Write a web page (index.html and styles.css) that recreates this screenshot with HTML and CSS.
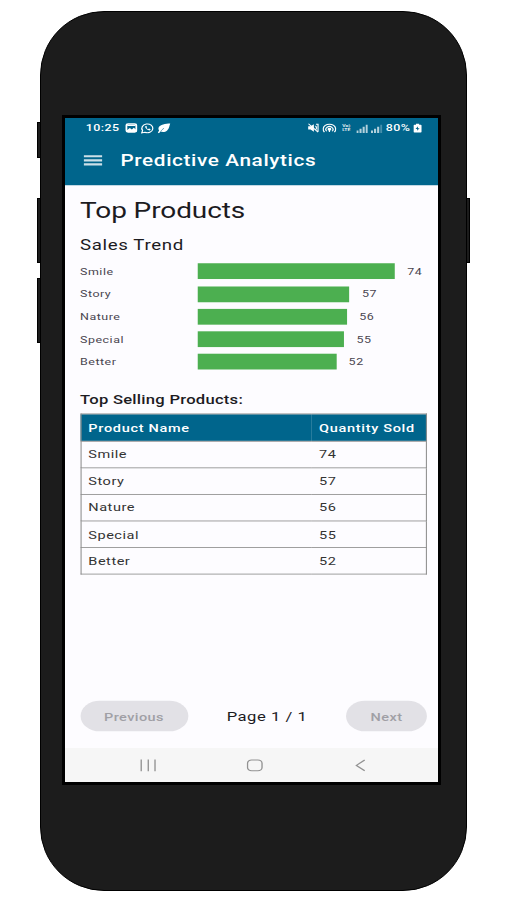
FILE: index.html
```html
<!DOCTYPE html>
<html lang="en">
<head>
    <meta charset="UTF-8">
    <meta name="viewport" content="width=device-width, initial-scale=1.0">
    <title>Predictive Analytics</title>
    <link rel="stylesheet" href="styles.css">
</head>
<body>
    <div class="phone">
        <span class="side-button mute-switch"></span>
        <span class="side-button volume-up"></span>
        <span class="side-button volume-down"></span>
        <span class="side-button power"></span>

        <div class="screen">
            <div class="app">
                <header>
                    <div class="status-bar">
                        <span class="time">10:25</span>
                        <div class="status-icons">
                            <svg width="12" height="12" viewBox="0 0 12 12"><rect x="1.2" y="1.2" width="9.6" height="9.6" rx="1.6" fill="none" stroke="#fff" stroke-width="1.8"/><path d="M1 9.5 4.5 6 6.5 8 8.3 5.8 11 8.5V11H1z" fill="#fff"/><path d="M2 3h8" stroke="#fff" stroke-width="1.4"/></svg>
                            <svg width="13" height="13" viewBox="0 0 13 13" fill="none" stroke="#fff"><path d="M1 12l.8-2.9A5.3 5.3 0 1 1 4 11.2z" stroke-width="1.2"/><path d="M4.2 4c0 2.6 2 4.800 4.700 5l.7-1.500-1.500-.8-.8.7C6.300 7 5.900 6.400 5.600 5.700l.6-.7-.7-1.500z" fill="#fff" stroke="none"/></svg>
                            <svg width="13" height="13" viewBox="0 0 13 13"><path d="M12.500.5C8 .8 2.500 1.500 1.300 5.500c-.5 1.600 0 2.800.5 3.600L.5 11.500l1 .9 1.700-2.200c1.600.9 4.500.9 6.300-1.200C11.800 6.500 11.500 3 12.500.5z" fill="#fff"/><path d="M3.200 10.200C4 8.700 5 7.500 6.500 6.300" stroke="#00658c" stroke-width=".6" fill="none"/></svg>
                        </div>
                        <div class="status-icons status-right">
                            <svg width="11" height="12" viewBox="0 0 11 12"><path d="M.5 4h2.300L6 1.500v9L2.800 8H.5z" fill="#fff"/><path d="M.8 1 10 11M7.500 3.500c1.300 1.200 1.300 3.800 0 5M8 1.500h2v9" stroke="#fff" stroke-width="1.100" fill="none"/></svg>
                            <svg width="14" height="12" viewBox="0 0 14 12" fill="none" stroke="#fff" stroke-width="1.200"><path d="M2.200 11a6 6 0 1 1 9.600 0M4.500 10a3.400 3.400 0 1 1 5 0"/><circle cx="7" cy="7.500" r="1.200" fill="#fff"/><path d="M7 8v3"/></svg>
                            <span class="volte">Vo)<br>LTE</span>
                            <svg class="signal" width="11" height="11" viewBox="0 0 11 11" fill="#fff"><path d="M0 8h2v3H0zM3 6h2v5H3zM6 3.500h2V11H6zM9 1h2v10H9z"/></svg>
                            <svg class="signal" width="11" height="11" viewBox="0 0 11 11" fill="#fff"><path d="M0 8h2v3H0zM3 6h2v5H3zM6 3.500h2V11H6z"/><path d="M9 1h2v10H9z" opacity=".4"/></svg>
                            <span class="battery">80%</span>
                            <svg width="8" height="12" viewBox="0 0 8 12"><path d="M2.500.8h3V2H7a1 1 0 0 1 1 1v7.500a1 1 0 0 1-1 1H1a1 1 0 0 1-1-1V3a1 1 0 0 1 1-1h1.500z" fill="#fff"/><path d="M4.500 3.800 2 7.200h1.700L3.400 9.500 6 6.300H4.300z" fill="#00658c"/></svg>
                        </div>
                    </div>
                    <div class="app-bar">
                        <svg class="menu-icon" width="18" height="14" viewBox="0 0 18 14" fill="#fff"><path d="M0 .8h18v2.600H0zM0 5.700h18v2.600H0zM0 10.600h18v2.600H0z"/></svg>
                        <span class="app-title">Predictive Analytics</span>
                    </div>
                </header>

                <main>
                    <h1>Top Products</h1>
                    <h2>Sales Trend</h2>

                    <div class="chart">
                        <div class="chart-row">
                            <span class="chart-label">Smile</span>
                            <div class="bar" style="width: 190px;"></div>
                            <span>74</span>
                        </div>
                        <div class="chart-row">
                            <span class="chart-label">Story</span>
                            <div class="bar" style="width: 146.4px;"></div>
                            <span>57</span>
                        </div>
                        <div class="chart-row">
                            <span class="chart-label">Nature</span>
                            <div class="bar" style="width: 143.8px;"></div>
                            <span>56</span>
                        </div>
                        <div class="chart-row">
                            <span class="chart-label">Special</span>
                            <div class="bar" style="width: 141.2px;"></div>
                            <span>55</span>
                        </div>
                        <div class="chart-row">
                            <span class="chart-label">Better</span>
                            <div class="bar" style="width: 133.5px;"></div>
                            <span>52</span>
                        </div>
                    </div>

                    <h3>Top Selling Products:</h3>
                    <table>
                        <thead>
                            <tr><th>Product Name</th><th>Quantity Sold</th></tr>
                        </thead>
                        <tbody>
                            <tr><td>Smile</td><td>74</td></tr>
                            <tr><td>Story</td><td>57</td></tr>
                            <tr><td>Nature</td><td>56</td></tr>
                            <tr><td>Special</td><td>55</td></tr>
                            <tr><td>Better</td><td>52</td></tr>
                        </tbody>
                    </table>

                    <div class="pagination">
                        <button class="prev" disabled>Previous</button>
                        <span>Page 1 / 1</span>
                        <button class="next" disabled>Next</button>
                    </div>
                </main>

                <div class="nav-bar">
                    <svg width="16" height="16" viewBox="0 0 16 16" fill="none" stroke="#929292" stroke-width="1.300"><path d="M1.500 1v14M8.300 1v14M14.800 1v14"/></svg>
                    <svg width="16" height="16" viewBox="0 0 16 16" fill="none" stroke="#929292" stroke-width="1.300"><rect x="1" y="1.500" width="14" height="13" rx="4"/></svg>
                    <svg width="16" height="16" viewBox="0 0 16 16" fill="none" stroke="#929292" stroke-width="1.400"><path d="M12 1.500 4 8l8 6.500"/></svg>
                </div>
            </div>
        </div>
    </div>
</body>
</html>
```
FILE: styles.css
```css
/* Reset and base styles */
* {
    margin: 0;
    padding: 0;
    box-sizing: border-box;
}

body {
    font-family: Roboto, sans-serif;
    color: #1c1b1f;
    background: #fff;
    overflow: hidden;
}

/* Phone frame */
.phone {
    position: relative;
    width: 427px;
    height: 880px;
    margin: 11px 0 0 40px;
    padding: 103px 0 0 21px;
    background: #1c1c1c;
    border: 1px solid #000;
    border-radius: 64px;
}

.side-button {
    position: absolute;
    width: 4px;
    height: 65px;
    background: #1c1c1c;
    border: 1px solid #000;
}

.mute-switch {
    left: -4px;
    top: 110px;
    height: 36px;
}

.volume-up {
    left: -4px;
    top: 186px;
}

.volume-down {
    left: -4px;
    top: 266px;
}

.power {
    right: -4px;
    top: 186px;
}

.screen {
    width: 379px;
    height: 670px;
    border: 3px solid #000;
    overflow: hidden;
}

/* 360x800 app, squeezed to fit the frame */
.app {
    display: flex;
    flex-direction: column;
    width: 360px;
    height: 800px;
    background: #fdfcff;
    transform: scale(1.037, 0.83);
    transform-origin: 0 0;
}

/* Header */
header {
    height: 81px;
    background: #00658c;
    color: #fff;
}

.status-bar {
    display: flex;
    align-items: center;
    height: 24px;
    padding: 0 16px 0 20px;
    font-size: 12px;
    font-weight: 500;
}

.time {
    width: 38px;
    letter-spacing: 0.4px;
}

.status-icons {
    display: flex;
    align-items: center;
    gap: 3px;
}

.status-right {
    margin-left: auto;
}

.volte {
    width: 13px;
    padding-left: 2px;
    font-size: 5px;
    line-height: 5px;
}

.signal {
    opacity: 0.7;
}

.battery {
    letter-spacing: 0.4px;
}

.app-bar {
    display: flex;
    align-items: center;
    height: 54px;
    padding-left: 17.5px;
}

.menu-icon {
    margin-right: 18px;
    opacity: 0.8;
}

.app-title {
    font-size: 20px;
    font-weight: 500;
    letter-spacing: 0.6px;
}

/* Content */
main {
    display: flex;
    flex-direction: column;
    flex: 1;
    padding: 13px 11px 20px 14.5px;
}

h1 {
    font-size: 27px;
    font-weight: 400;
    line-height: 36px;
    letter-spacing: -0.1px;
}

h2 {
    margin-top: 11px;
    font-size: 18px;
    font-weight: 400;
    line-height: 24px;
    letter-spacing: 0.6px;
}

h3 {
    margin-top: 20px;
    font-size: 16px;
    font-weight: 500;
    line-height: 24px;
    letter-spacing: 0.25px;
}

/* Bar chart */
.chart {
    margin-top: 6.4px;
}

.chart-row {
    display: flex;
    align-items: center;
    height: 27.2px;
    font-size: 12px;
    letter-spacing: 0.5px;
    color: #49454f;
}

.chart-label {
    width: 113.5px;
}

.bar {
    height: 19px;
    margin-right: 12px;
    background: #4caf50;
}

/* Table */
table {
    width: 100%;
    margin-top: 5px;
    border-collapse: collapse;
    table-layout: fixed;
    font-size: 14px;
}

tr {
    height: 32.2px;
    border: 1px solid #8c8c8c;
}

thead tr {
    background: #00658c;
}

th, td {
    padding: 0 7px;
    text-align: left;
    letter-spacing: 0.5px;
}

th:first-child {
    width: 223px;
}

th {
    font-weight: 500;
    letter-spacing: 0.65px;
    color: #fff;
}

td {
    color: #333;
}

/* Pagination */
.pagination {
    display: flex;
    align-items: center;
    justify-content: space-between;
    margin-top: auto;
    font-size: 16px;
    letter-spacing: 0.5px;
}

button {
    height: 37px;
    border: none;
    border-radius: 19px;
    background: #e2e1e6;
    color: #a09fa5;
    font-family: inherit;
    font-size: 14px;
    font-weight: 500;
    letter-spacing: 0.4px;
}

.prev {
    width: 104px;
}

.next {
    width: 78px;
}

/* Android navigation */
.nav-bar {
    display: flex;
    align-items: center;
    gap: 86.5px;
    height: 41px;
    padding-left: 72px;
    background: #f6f6f6;
}
```
